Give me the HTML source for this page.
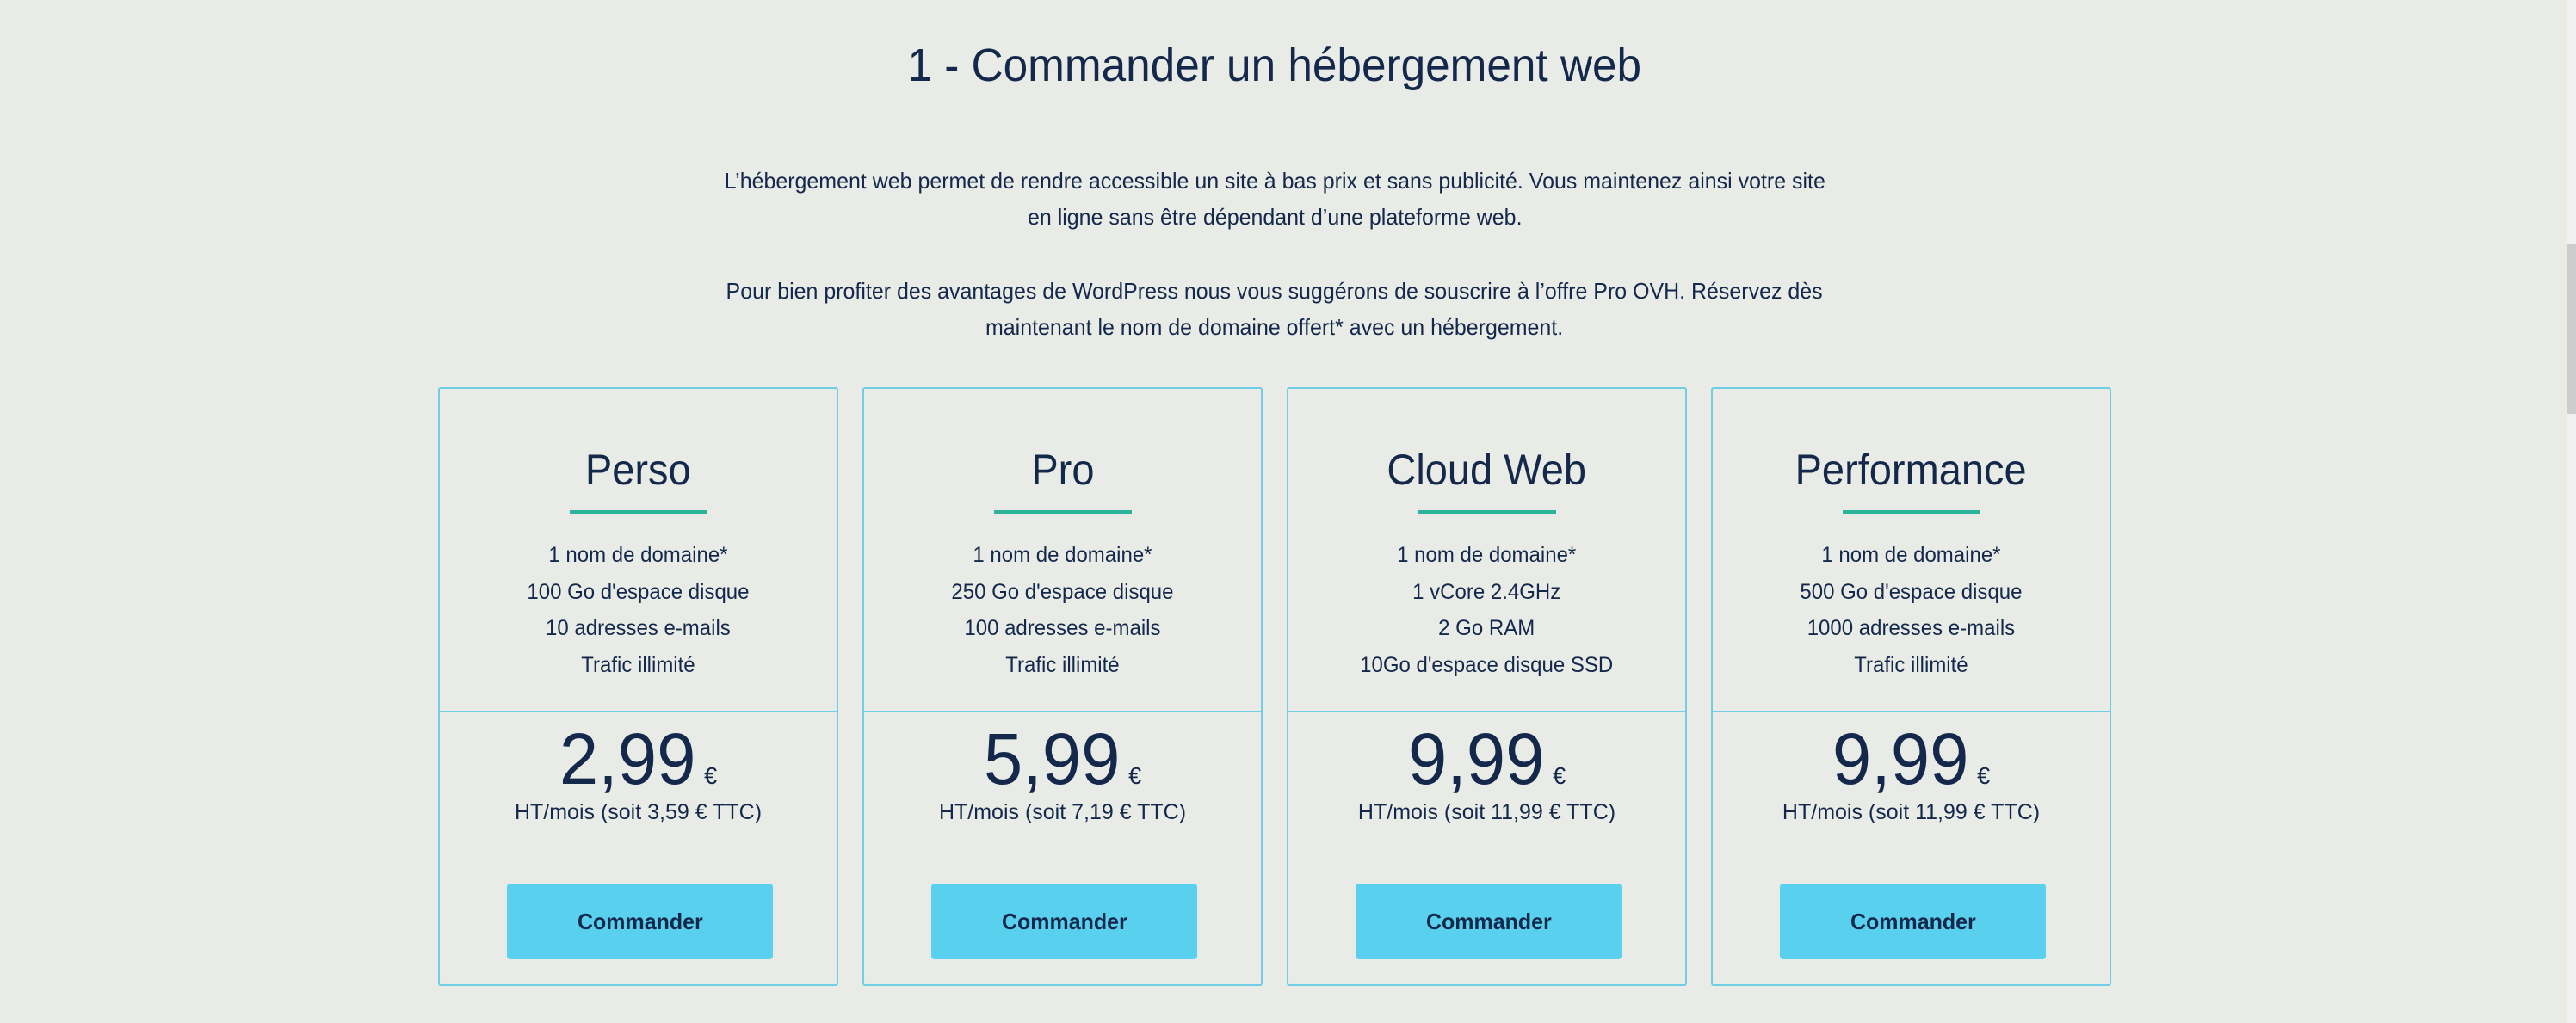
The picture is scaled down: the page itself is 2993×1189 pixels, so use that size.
<!DOCTYPE html>
<html><head><meta charset="utf-8"><style>
html,body{margin:0;padding:0}
body{width:2993px;height:1189px;background:#e9ebe6;overflow:hidden;position:relative;font-family:"Liberation Sans",sans-serif;color:#14284b}
.c{position:absolute;left:0;width:2962px;text-align:center;white-space:nowrap}
.s{display:inline-block;transform:scaleX(.96);transform-origin:center}
h1{margin:0;font-weight:normal;font-size:54px;line-height:60px;top:46px}
.p{font-size:26px;line-height:42px}
.card{position:absolute;top:450px;width:465px;height:696px;border:2px solid #6fcde6;border-radius:3px;box-sizing:border-box}
.card .t{position:absolute;top:62px;left:0;right:0;text-align:center;font-size:50px;line-height:64px}
.card .t .s{transform:scaleX(.94)}
.card .u{position:absolute;top:141px;left:50%;margin-left:-80px;width:160px;height:4px;background:#2bb39b}
.card .f{position:absolute;top:172px;left:0;right:0;text-align:center;font-size:25px;line-height:42.5px}
.card .d{position:absolute;top:374px;left:0;right:0;height:2px;background:#6fcde6}
.card .pr{position:absolute;top:380px;left:0;right:0;text-align:center;font-size:84px;line-height:100px}
.card .pr .s{transform:scaleX(.97)}
.card .pr span span{font-size:28px;margin-left:10px}
.card .h{position:absolute;top:472px;left:0;right:0;text-align:center;font-size:25px;line-height:40px}
.card .h .s{transform:scaleX(1)}
.card .b{position:absolute;top:575px;left:78px;width:309px;height:88px;background:#59d1ee;border-radius:4px;text-align:center;line-height:88px;font-size:26px;font-weight:bold}
.sb{position:absolute;left:2982px;top:0;width:11px;height:1189px;background:#f1f1f1;border-left:1px solid #fff}
.th{position:absolute;left:2983px;top:284px;width:10px;height:197px;background:#cdcdcd}
</style></head><body>
<h1 class="c"><span class="s" style="transform:scaleX(.95)">1 - Commander un hébergement web</span></h1>
<div class="c p" style="top:189px"><span class="s">L’hébergement web permet de rendre accessible un site à bas prix et sans publicité. Vous maintenez ainsi votre site<br>en ligne sans être dépendant d’une plateforme web.</span></div>
<div class="c p" style="top:317px"><span class="s">Pour bien profiter des avantages de WordPress nous vous suggérons de souscrire à l’offre Pro OVH. Réservez dès<br>maintenant le nom de domaine offert* avec un hébergement.</span></div>

<div class="card" style="left:509px">
<div class="t"><span class="s">Perso</span></div><div class="u"></div>
<div class="f"><span class="s">1 nom de domaine*<br>100 Go d'espace disque<br>10 adresses e-mails<br>Trafic illimité</span></div>
<div class="d"></div>
<div class="pr"><span class="s">2,99<span>€</span></span></div>
<div class="h"><span class="s">HT/mois (soit 3,59 € TTC)</span></div>
<div class="b"><span class="s">Commander</span></div>
</div>

<div class="card" style="left:1002px">
<div class="t"><span class="s">Pro</span></div><div class="u"></div>
<div class="f"><span class="s">1 nom de domaine*<br>250 Go d'espace disque<br>100 adresses e-mails<br>Trafic illimité</span></div>
<div class="d"></div>
<div class="pr"><span class="s">5,99<span>€</span></span></div>
<div class="h"><span class="s">HT/mois (soit 7,19 € TTC)</span></div>
<div class="b"><span class="s">Commander</span></div>
</div>

<div class="card" style="left:1495px">
<div class="t"><span class="s">Cloud Web</span></div><div class="u"></div>
<div class="f"><span class="s">1 nom de domaine*<br>1 vCore 2.4GHz<br>2 Go RAM<br>10Go d'espace disque SSD</span></div>
<div class="d"></div>
<div class="pr"><span class="s">9,99<span>€</span></span></div>
<div class="h"><span class="s">HT/mois (soit 11,99 € TTC)</span></div>
<div class="b"><span class="s">Commander</span></div>
</div>

<div class="card" style="left:1988px">
<div class="t"><span class="s">Performance</span></div><div class="u"></div>
<div class="f"><span class="s">1 nom de domaine*<br>500 Go d'espace disque<br>1000 adresses e-mails<br>Trafic illimité</span></div>
<div class="d"></div>
<div class="pr"><span class="s">9,99<span>€</span></span></div>
<div class="h"><span class="s">HT/mois (soit 11,99 € TTC)</span></div>
<div class="b"><span class="s">Commander</span></div>
</div>

<div class="sb"></div><div class="th"></div>
</body></html>
